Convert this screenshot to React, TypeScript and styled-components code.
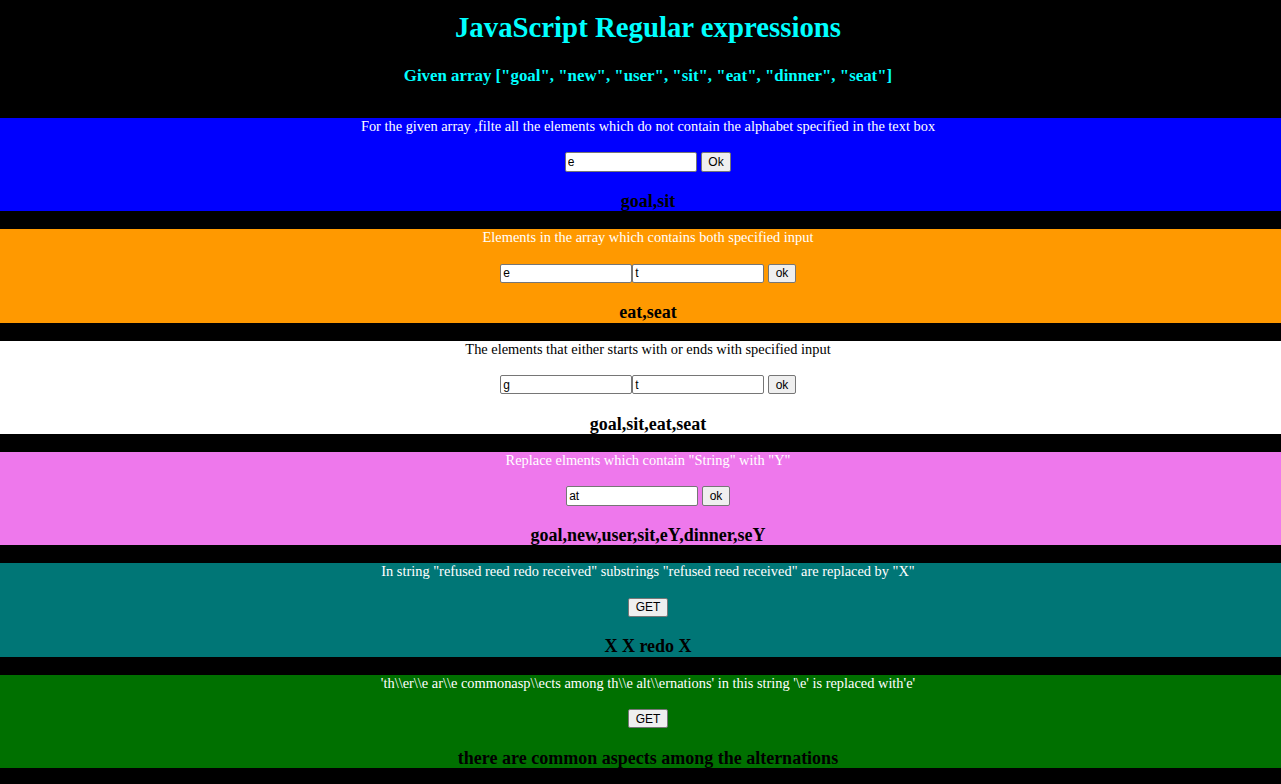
import React from "react";
import styled, { createGlobalStyle } from "styled-components";

const GlobalStyle = createGlobalStyle`
  html, body {
    margin: 0;
    padding: 0;
    background: #000;
  }
  body {
    font-family: "Liberation Serif", "Times New Roman", serif;
    font-size: 14.4px;
  }
`;

const Page = styled.div`
  background: #000;
  min-height: 784px;
  padding-top: 10.5px;
  display: flex;
  flex-direction: column;
`;

const Header = styled.header`
  padding-left: 15px;
  text-align: center;
  margin-bottom: 32.3px;
`;

const Title = styled.h1`
  margin: 0;
  font-size: 28.8px;
  line-height: 33px;
  font-weight: bold;
  color: #00ffff;
`;

const Subtitle = styled.h3`
  margin: 22.8px 0 0;
  font-size: 16.85px;
  line-height: 19.4px;
  font-weight: bold;
  color: #00ffff;
`;

const Sections = styled.div`
  display: flex;
  flex-direction: column;
  gap: 17.95px;
`;

const Section = styled.section<{ $bg: string; $fg: string }>`
  background: ${(p) => p.$bg};
  color: ${(p) => p.$fg};
  padding-left: 15px;
  text-align: center;
  display: flex;
  flex-direction: column;
  align-items: center;
`;

const Caption = styled.p`
  margin: 0;
  font-size: 14.4px;
  line-height: 16.5px;
`;

const Controls = styled.div`
  margin-top: 17.8px;
  height: 19.4px;
  display: flex;
  align-items: center;
  justify-content: center;
`;

const TextInput = styled.input`
  box-sizing: border-box;
  width: 132px;
  height: 19.4px;
  margin: 0;
  padding: 0 2px;
  border: 1px solid #767676;
  border-radius: 2px;
  background: #fff;
  color: #000;
  font-family: "Liberation Sans", Arial, sans-serif;
  font-size: 12px;
  outline: none;
`;

const Button = styled.button`
  box-sizing: border-box;
  height: 19.4px;
  margin: 0 0 0 4px;
  padding: 0 6.5px;
  border: 1px solid #767676;
  border-radius: 2px;
  background: #efefef;
  color: #000;
  font-family: "Liberation Sans", Arial, sans-serif;
  font-size: 12px;
  line-height: 1;

  &:first-child {
    margin-left: 0;
  }
`;

const Result = styled.h3`
  margin: 20.3px 0 0;
  font-size: 18px;
  line-height: 19.4px;
  font-weight: bold;
  color: #000;
`;

type Item = {
  bg: string;
  fg: string;
  caption: string;
  inputs: string[];
  button: string;
  result: string;
};

const items: Item[] = [
  {
    bg: "#0000ff",
    fg: "#ffffff",
    caption:
      "For the given array ,filte all the elements which do not contain the alphabet specified in the text box",
    inputs: ["e"],
    button: "Ok",
    result: "goal,sit",
  },
  {
    bg: "#ff9900",
    fg: "#ffffff",
    caption: "Elements in the array which contains both specified input",
    inputs: ["e", "t"],
    button: "ok",
    result: "eat,seat",
  },
  {
    bg: "#ffffff",
    fg: "#000000",
    caption: "The elements that either starts with or ends with specified input",
    inputs: ["g", "t"],
    button: "ok",
    result: "goal,sit,eat,seat",
  },
  {
    bg: "#ee78ec",
    fg: "#ffffff",
    caption: 'Replace elments which contain "String" with "Y"',
    inputs: ["at"],
    button: "ok",
    result: "goal,new,user,sit,eY,dinner,seY",
  },
  {
    bg: "#007676",
    fg: "#ffffff",
    caption:
      'In string "refused reed redo received" substrings "refused reed received" are replaced by "X"',
    inputs: [],
    button: "GET",
    result: "X X redo X",
  },
  {
    bg: "#007000",
    fg: "#ffffff",
    caption:
      "'th\\\\er\\\\e ar\\\\e commonasp\\\\ects among th\\\\e alt\\\\ernations' in this string '\\e' is replaced with'e'",
    inputs: [],
    button: "GET",
    result: "there are common aspects among the alternations",
  },
];

export default function App() {
  return (
    <>
      <GlobalStyle />
      <Page>
        <Header>
          <Title>JavaScript Regular expressions</Title>
          <Subtitle>
            Given array ["goal", "new", "user", "sit", "eat", "dinner", "seat"]
          </Subtitle>
        </Header>
        <Sections>
          {items.map((it, i) => (
            <Section key={i} $bg={it.bg} $fg={it.fg}>
              <Caption>{it.caption}</Caption>
              <Controls>
                {it.inputs.map((v, j) => (
                  <TextInput key={j} type="text" defaultValue={v} />
                ))}
                <Button type="button">{it.button}</Button>
              </Controls>
              <Result>{it.result}</Result>
            </Section>
          ))}
        </Sections>
      </Page>
    </>
  );
}
